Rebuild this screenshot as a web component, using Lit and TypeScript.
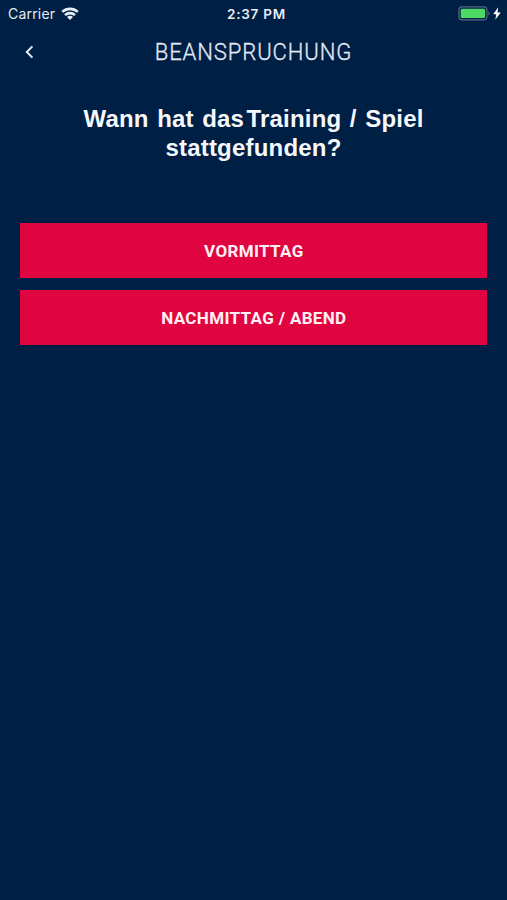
import { LitElement, html, css } from "lit";
import { customElement } from "lit/decorators.js";

@customElement("app-root")
export class AppRoot extends LitElement {
  static styles = css`
    :host {
      display: flex;
      flex-direction: column;
      height: 100vh;
      box-sizing: border-box;
      overflow: hidden;
      background: #001f45;
      color: #fff;
      font-family: Inter, "Liberation Sans", sans-serif;
    }
    .status {
      display: grid;
      grid-template-columns: 1fr auto 1fr;
      align-items: center;
      height: 27px;
      padding: 0 6px 0 8px;
      color: #e6ecf5;
    }
    .carrier {
      display: flex;
      align-items: center;
      gap: 6px;
      font-size: 14px;
      letter-spacing: 0.2px;
    }
    .time {
      padding-left: 4px;
      font-size: 13.5px;
      font-weight: 600;
      letter-spacing: 0.75px;
    }
    .power {
      display: flex;
      align-items: center;
      justify-content: flex-end;
      gap: 3px;
    }
    svg {
      display: block;
    }
    .bar {
      display: grid;
      grid-template-columns: 59px 1fr 59px;
      align-items: center;
      height: 50px;
    }
    .back {
      display: flex;
      justify-content: center;
      padding: 0;
      border: 0;
      background: none;
      color: #e8edf5;
    }
    .title {
      margin: 0;
      text-align: center;
      white-space: nowrap;
      font: 300 24px/29px Roboto, sans-serif;
      letter-spacing: 0.95px;
      color: #e3e9f3;
      -webkit-text-stroke: 0.3px #e3e9f3;
      transform: scaleX(0.92);
    }
    .question {
      margin: 27px 0 0;
      text-align: center;
      font: 700 24px/29px "Liberation Sans", sans-serif;
      letter-spacing: 0.2px;
      word-spacing: 1.6px;
      color: #f6f8fc;
    }
    .tight {
      margin-left: -6.2px;
    }
    .choices {
      display: flex;
      flex-direction: column;
      gap: 12px;
      margin: 61px 19.6px 0 20.4px;
    }
    .choice {
      height: 55px;
      padding: 0;
      border: 0;
      background: #e00541;
      color: #fff0f3;
      font: 700 17px/20px Roboto, sans-serif;
      letter-spacing: 0.35px;
    }
  `;

  render() {
    return html`
      <div class="status">
        <div class="carrier">
          <span>Carrier</span>
          <svg width="18" height="13" viewBox="0 0 18 13" fill="none" stroke="currentColor" stroke-width="2.6">
            <path d="M1.2 4.9C5.6 .8 12.4 .8 16.8 4.9M4 8.1C6.8 5.5 11.2 5.5 14 8.1" />
            <path d="M6 10C7.8 8.4 10.2 8.4 12 10L9 13Z" fill="currentColor" stroke="none" />
          </svg>
        </div>
        <span class="time">2:37 PM</span>
        <div class="power">
          <svg width="32" height="15" viewBox="0 0 32 15">
            <rect x=".9" y=".9" width="28" height="13" rx="3.2" fill="none" stroke="#526985" stroke-width="1.2" />
            <rect x="2.7" y="2.7" width="24.4" height="9.4" rx="1.5" fill="#4cd964" />
            <path d="M30.3 5.2C32 5.8 32 9 30.3 9.6Z" fill="#526985" />
          </svg>
          <svg width="8" height="13" viewBox="0 0 8 13" fill="#fff">
            <path d="M5.2 .3L.2 7.2H3.3L2.3 12.7L7.8 5.4H4.5Z" />
          </svg>
        </div>
      </div>
      <header class="bar">
        <button class="back" aria-label="Zurück">
          <svg width="9" height="14" viewBox="0 0 9 14" fill="none" stroke="currentColor" stroke-width="2">
            <path d="M7.4 1.4L1.8 7L7.4 12.6" />
          </svg>
        </button>
        <h1 class="title">BEANSPRUCHUNG</h1>
      </header>
      <h2 class="question">Wann hat das <span class="tight">Training / Spiel</span><br />stattgefunden?</h2>
      <div class="choices">
        <button class="choice">VORMITTAG</button>
        <button class="choice">NACHMITTAG / ABEND</button>
      </div>
    `;
  }
}
